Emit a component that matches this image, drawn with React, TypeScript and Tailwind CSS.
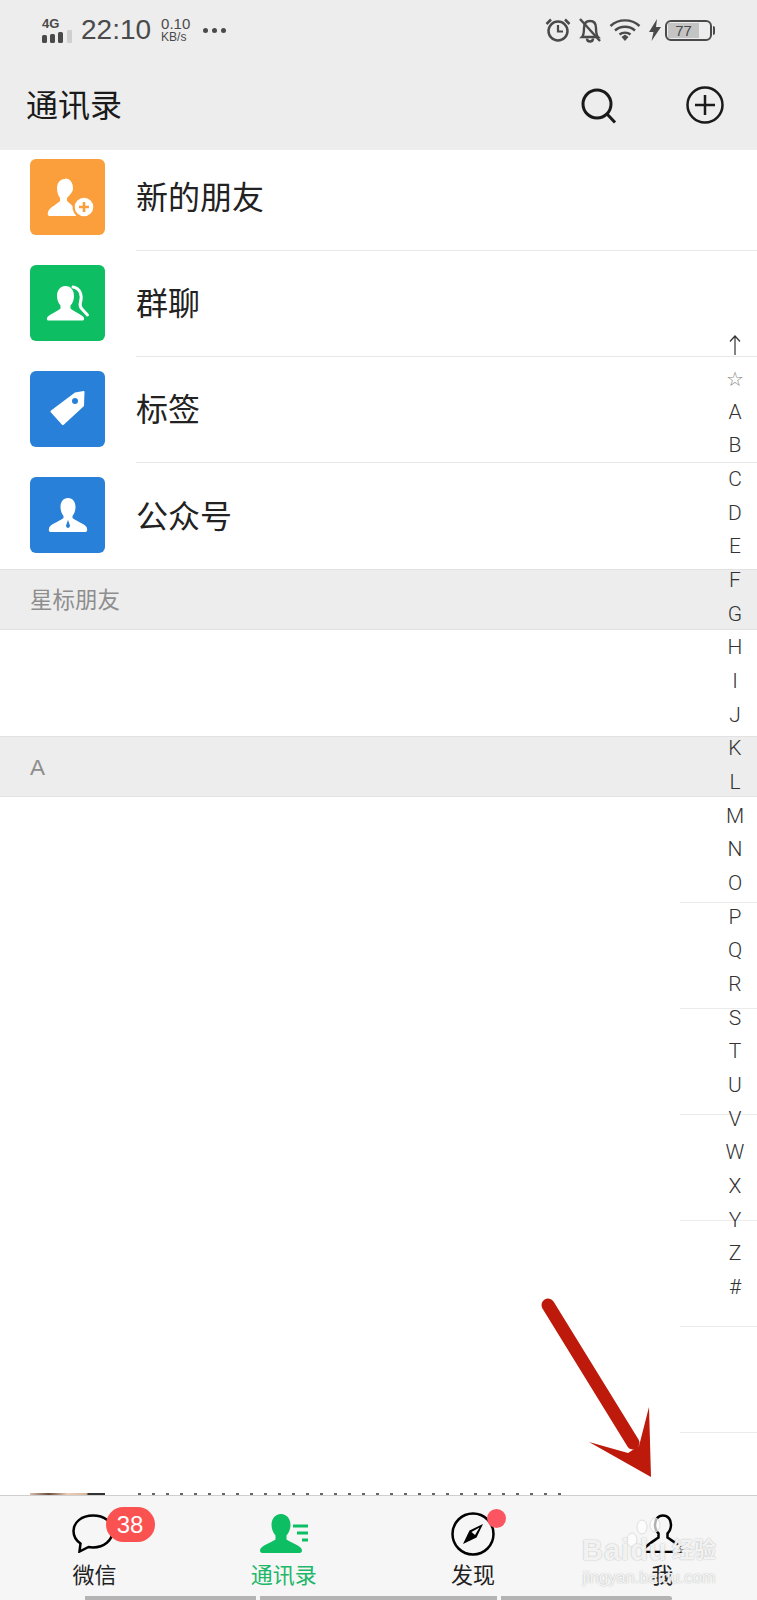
import React from 'react'

const sans = "font-['Liberation_Sans','Noto_Sans_CJK_SC',sans-serif]"
const indexItems = ['↑', '☆', ...'ABCDEFGHIJKLMNOPQRSTUVWXYZ'.split(''), '#']

const PersonPlusIcon = () => (
  <svg viewBox="0 0 75 76" className="h-[76px] w-[75px]">
    <path d="M35 20c-5.500 0-8 4.500-8 9.500 0 4 1.500 7.500 3 9.500v3c-2.500 3-8 5-11 9-1.500 2-2 6 .5 6H47c2 0 1.500-3 1-5-3-4-8-7-11-10v-3c1.500-2 6-5.500 6-9.500 0-5.500-2.500-10-8-10z" fill="#fff" />
    <circle cx="54" cy="48" r="11.500" fill="#fb9e3c" />
    <circle cx="54" cy="48" r="9.300" fill="#fff" />
    <path d="M54 43v10M49 48h10" stroke="#fb9e3c" strokeWidth="2.600" />
  </svg>
)

const GroupIcon = () => (
  <svg viewBox="0 0 75 76" className="h-[76px] w-[75px]">
    <path d="M43 22c7 1 9.500 8 7.500 15-.8 3-.5 5 1 6.500l6 6.500" fill="none" stroke="#fff" strokeWidth="3" strokeLinecap="round" />
    <path d="M35.500 21c-5.500 0-8.500 4.500-8.500 10 0 4 1.500 7.500 3.500 9.500v3c-3 3-9.500 5-12.500 8-1.500 1.500-1.500 4 .5 4h34c2 0 2-2.500.5-4-3-3-9.500-5-12.500-8v-3c2-2 3.500-5.500 3.500-9.500 0-5.500-3-10-8.500-10z" fill="#fff" />
  </svg>
)

const TagIcon = () => (
  <svg viewBox="0 0 75 76" className="h-[76px] w-[75px]">
    <path d="M21 39.500L45 21.500l8.500-1.500c.7 0 1 .4 1 1l-.5 14-20 18.500c-.8.7-1.500.7-2.200 0L21 41.500c-.6-.6-.6-1.500 0-2z" fill="#fff" />
    <circle cx="45" cy="30" r="3" fill="#2980d9" />
  </svg>
)

const OfficialIcon = () => (
  <svg viewBox="0 0 75 76" className="h-[76px] w-[75px]">
    <path d="M38 21c-5 0-7.500 4-7.500 9 0 4 1.500 7 3 9v2c-3 3-11 5-14 9-1 2-1 5 1 5h35c2 0 2-3 1-5-3-4-11-6-14-9v-2c1.500-2 3-5 3-9 0-5-2.500-9-7.500-9z" fill="#fff" />
    <path d="M38 43l2 5.500c0 1.500-1 2.500-2 2.500s-2-1-2-2.500z" fill="#2980d9" />
  </svg>
)

const contactRows = [
  { title: '新的朋友', bg: 'bg-[#fb9e3c]', icon: <PersonPlusIcon /> },
  { title: '群聊', bg: 'bg-[#0dbe62]', icon: <GroupIcon /> },
  { title: '标签', bg: 'bg-[#2980d9]', icon: <TagIcon /> },
  { title: '公众号', bg: 'bg-[#2980d9]', icon: <OfficialIcon /> },
]

const StatusBar = () => (
  <div className="flex h-[60px] items-center justify-between pl-[42px] pr-[42px] text-[#4a4a4a]">
    <div className="flex items-center">
      <div className="flex w-[30px] flex-col">
        <span className="font-['Liberation_Sans',sans-serif] text-[13px] leading-[13px] font-bold">4G</span>
        <svg viewBox="0 0 30 14" className="h-[14px] w-[30px]">
          <rect x="0" y="5" width="5" height="8" rx="1.500" fill="#4a4a4a" />
          <rect x="8" y="4" width="5" height="9" rx="1.500" fill="#4a4a4a" />
          <rect x="16" y="2" width="5" height="11" rx="1.500" fill="#4a4a4a" />
          <rect x="25" y="0" width="5" height="13" rx="1" fill="#cfcfcf" />
        </svg>
      </div>
      <span className="ml-[9px] font-['Liberation_Sans',sans-serif] text-[28px] leading-none">22:10</span>
      <div className="ml-[10px] flex flex-col font-['Liberation_Sans',sans-serif]">
        <span className="text-[15px] leading-[14px]">0.10</span>
        <span className="text-[12px] leading-[12px]">KB/s</span>
      </div>
      <div className="ml-[13px] flex gap-[4px]">
        <span className="h-[5px] w-[5px] rounded-full bg-[#4a4a4a]" />
        <span className="h-[5px] w-[5px] rounded-full bg-[#4a4a4a]" />
        <span className="h-[5px] w-[5px] rounded-full bg-[#4a4a4a]" />
      </div>
    </div>
    <div className="flex items-center">
      <svg viewBox="0 0 26 26" className="h-[26px] w-[26px]" fill="none" stroke="#4a4a4a">
        <circle cx="13" cy="14" r="9.500" strokeWidth="2.500" />
        <path d="M13 8v6.500h5" strokeWidth="2.200" />
        <path d="M1.500 7L6 2.500M24.500 7L20 2.500" strokeWidth="2.500" />
      </svg>
      <svg viewBox="0 0 24 26" className="ml-[7px] h-[26px] w-[24px]" fill="none" stroke="#4a4a4a" strokeWidth="2.400">
        <path d="M4 20c2-2 2-5 2-9 0-4 2-7 6-7s6 3 6 7c0 4 0 7 2 9z" />
        <path d="M9 21.500c0 2 1.500 3 3 3s3-1 3-3" />
        <path d="M2 2l20 22" />
      </svg>
      <svg viewBox="0 0 32 24" className="ml-[7px] h-[24px] w-[32px]" fill="none" stroke="#4a4a4a" strokeWidth="2.400">
        <path d="M1.500 8c8-7.500 21-7.500 29 0" />
        <path d="M6 12.500c5.500-5 14.500-5 20 0" />
        <path d="M10.500 16.500c3-2.500 8-2.500 11 0" />
        <path d="M12.500 19l3.500-2.500 3.500 2.500-3.500 4z" fill="#4a4a4a" stroke="none" />
      </svg>
      <svg viewBox="0 0 12 22" className="ml-[8px] h-[22px] w-[12px]">
        <path d="M8 0L0 13h4.500L2.500 22 12 8H7z" fill="#4a4a4a" />
      </svg>
      <div className="relative ml-[4px] flex h-[21px] w-[47px] items-center rounded-[6px] border-2 border-[#4a4a4a] p-[1px]">
        <div className="flex h-full w-[31px] items-center justify-center bg-[#c4c4c4] font-['Liberation_Sans',sans-serif] text-[15px] leading-none">
          77
        </div>
      </div>
      <span className="ml-[1px] h-[9px] w-[2px] rounded-r-sm bg-[#4a4a4a]" />
    </div>
  </div>
)

const Header = () => (
  <div className="relative z-10 h-[150px] bg-[#ededed]">
    <StatusBar />
    <div className="flex h-[90px] items-center justify-between pl-[26px] pr-[33px]">
      <h1 className={`${sans} mt-[2px] text-[32px] leading-none font-normal text-[#1a1a1a]`}>通讯录</h1>
      <div className="flex items-center gap-[69px]">
        <svg viewBox="0 0 36 36" className="mt-[2px] h-[36px] w-[36px]" fill="none" stroke="#1a1a1a" strokeWidth="3">
          <circle cx="16" cy="16" r="14" />
          <path d="M26 26l8 8.500" />
        </svg>
        <svg viewBox="0 0 38 38" className="h-[38px] w-[38px]" fill="none" stroke="#1a1a1a" strokeWidth="2.500">
          <circle cx="19" cy="19" r="17.500" />
          <path d="M19 9v20M9 19h20" />
        </svg>
      </div>
    </div>
  </div>
)

const SectionHeader = ({ title }: { title: string }) => (
  <div className={`${sans} flex h-[61px] items-center border-y border-[#e2e2e2] bg-[#ededed] pl-[30px] pt-[3px] text-[22.500px] leading-none text-[#8e8e8e]`}>
    {title}
  </div>
)

const RightDivider = () => (
  <div className="flex h-[106px] items-end justify-end">
    <div className="h-px w-[77px] bg-[#ececec]" />
  </div>
)

const TabItem = ({ label, active, children }: { label: string; active?: boolean; children: React.ReactNode }) => (
  <div className="flex flex-col items-center">
    <div className="relative h-[48px] w-[60px]">{children}</div>
    <span className={`${sans} mt-[9px] text-[22px] leading-[26px] ${active ? 'text-[#1fb769]' : 'text-[#1f1f1f]'}`}>{label}</span>
  </div>
)

const TabBar = () => (
  <div className="relative h-[106px] border-t border-[#cfcfcf] bg-[#f6f6f6]">
    <div className="grid grid-cols-4 pt-[10px]">
      <TabItem label="微信">
        <svg viewBox="0 0 42 39" className="absolute left-[7px] top-[8px] h-[39px] w-[42px]" fill="none" stroke="#000" strokeWidth="2.500">
          <path d="M21 1.500C10 1.500 1.500 8 1.500 17c0 5 2.500 9.500 7 12.500l-1 8 9-4.500c1.500.3 3 .4 4.500.4 11 0 19.500-7 19.500-16.400S32 1.500 21 1.500z" />
        </svg>
        <span className="absolute left-[41px] top-[1px] flex h-[35px] w-[49px] items-center justify-center rounded-full bg-[#fa5151] font-['Liberation_Sans',sans-serif] text-[24px] leading-none text-[#fff]">
          38
        </span>
      </TabItem>
      <TabItem label="通讯录" active>
        <svg viewBox="0 0 49 39" className="absolute left-[5px] top-[8px] h-[39px] w-[49px]">
          <path d="M22 0c-6 0-9.500 5-9.500 11 0 4.500 2 8 4 10.500v4c-4 3-11 5-14.500 8.500-1.500 1.500-1.500 5 1.500 5h37c3 0 3-3.500 1.500-5-3.500-3.500-10.500-5.500-14.500-8.500v-4c2-2.500 4-6 4-10.500 0-6-3.500-11-9.500-11z" fill="#0dbe62" />
          <path d="M34 12h15M38 19h11M43 26h6" stroke="#0dbe62" strokeWidth="3" />
        </svg>
      </TabItem>
      <TabItem label="发现">
        <svg viewBox="0 0 44 44" className="absolute left-[8px] top-[6px] h-[44px] w-[44px]" fill="none">
          <circle cx="22" cy="22" r="20.500" stroke="#000" strokeWidth="2.500" />
          <path d="M32 12L25.500 25.500 12 32l6.500-13.500z" fill="#000" />
          <path d="M28.500 15.500L24 23l-3.500-3z" fill="#f6f6f6" />
        </svg>
        <span className="absolute left-[44px] top-[3px] h-[19px] w-[19px] rounded-full bg-[#fa5560]" />
      </TabItem>
      <TabItem label="我">
        <svg viewBox="0 0 42 39" className="absolute left-[10px] top-[8px] h-[39px] w-[42px]" fill="none" stroke="#000" strokeWidth="2.500">
          <path d="M21 1.500c-5 0-8 4-8 9 0 4 1.500 7 3.500 9v4c-4 3-10 6-14 11-1 1.500-.5 3.500 1 3.500h35c1.500 0 2-2 1-3.500-4-5-10-8-14-11v-4c2-2 3.500-5 3.500-9 0-5-3-9-8-9z" />
        </svg>
      </TabItem>
    </div>
    <div className="absolute inset-x-0 bottom-0 flex h-[5px] gap-[4px] pl-[85px]">
      <div className="w-[171px] bg-[#b4b4b4]" />
      <div className="w-[237px] bg-[#b4b4b4]" />
      <div className="w-[171px] rounded-r-sm bg-[#b4b4b4]" />
    </div>
    {/* watermark */}
    <div className="absolute left-[582px] top-[42px] flex w-[134px] flex-col items-center text-[#ffffffd8]">
      <svg viewBox="0 0 60 40" className="absolute left-[40px] top-[-22px] h-[40px] w-[60px]" fill="#ffffffb0" stroke="#dedede">
        <ellipse cx="10" cy="24" rx="5" ry="7" />
        <ellipse cx="20" cy="11" rx="5" ry="7" />
        <ellipse cx="33" cy="9" rx="5" ry="7" />
      </svg>
      <span className="relative flex h-[24px] w-full items-center justify-between font-['Liberation_Sans',sans-serif] text-[29px] leading-none font-bold [text-shadow:0_0_1.500px_#a8a8a8]">
        <span className="tracking-[1px]">Baidu</span>
        <span className={`${sans} text-[22px]`}>经验</span>
      </span>
      <span className="relative mt-[8px] font-['Liberation_Sans',sans-serif] text-[16.500px] leading-[14px] whitespace-nowrap [text-shadow:0_0_1.500px_#a8a8a8]">
        jingyan.baidu.com
      </span>
    </div>
  </div>
)

export default function App() {
  return (
    <div className="relative h-[1600px] w-[757px] overflow-hidden bg-[#fff]">
      <Header />
      <div className="-mt-[5px]">
        {contactRows.map((row, i) => (
          <div key={row.title} className="flex h-[106px] items-center pl-[30px]">
            <div className={`${row.bg} -mt-[2px] h-[76px] w-[75px] shrink-0 overflow-hidden rounded-[6px]`}>{row.icon}</div>
            <div className={`ml-[31px] flex h-full flex-1 items-center ${i < 3 ? 'border-b border-[#e8e8e8]' : ''}`}>
              <span className={`${sans} mt-[1px] text-[32px] leading-none text-[#222]`}>{row.title}</span>
            </div>
          </div>
        ))}
      </div>
      <SectionHeader title="星标朋友" />
      <div className="h-[106px]" />
      <SectionHeader title="A" />
      {/* rows hidden behind the white blur, only the right end of each divider shows */}
      <RightDivider />
      <RightDivider />
      <RightDivider />
      <RightDivider />
      <RightDivider />
      <RightDivider />
      <div className="flex h-[62px] items-end pl-[30px]">
        <div className="h-[2px] w-[75px] bg-[linear-gradient(90deg,#d8c0b0,#6b4a3a_25%,#f0cdb8_50%,#d8b89a_75%,#333_78%,#333)]" />
        <div className="ml-[33px] h-[2px] w-[434px] bg-[repeating-linear-gradient(90deg,#666_0_3px,transparent_3px_14px)]" />
      </div>
      <TabBar />

      <div className="absolute right-0 top-[328px] flex w-[44px] flex-col items-center">
        {indexItems.map((item) => (
          <span key={item} className={`flex h-[33.680px] w-full items-center justify-center font-['Roboto',sans-serif] leading-none font-light text-[#333] ${item === '☆' ? 'text-[20px] text-[#888]' : 'text-[21px]'}`}>
            {item === '↑' ? (
              <svg viewBox="0 0 12 20" className="h-[20px] w-[12px]" fill="none" stroke="#333" strokeWidth="1.200">
                <path d="M6 20V1M1 6.500L6 1l5 5.500" />
              </svg>
            ) : (
              item
            )}
          </span>
        ))}
      </div>

      <svg viewBox="0 0 130 195" className="absolute left-[530px] top-[1290px] h-[195px] w-[130px]">
        <path d="M18 15L103 153" stroke="#bd1a0c" strokeWidth="13" strokeLinecap="round" fill="none" />
        <path d="M119 117L121 187 59 152 98 163 109 156z" fill="#bd1a0c" />
      </svg>
    </div>
  )
}
